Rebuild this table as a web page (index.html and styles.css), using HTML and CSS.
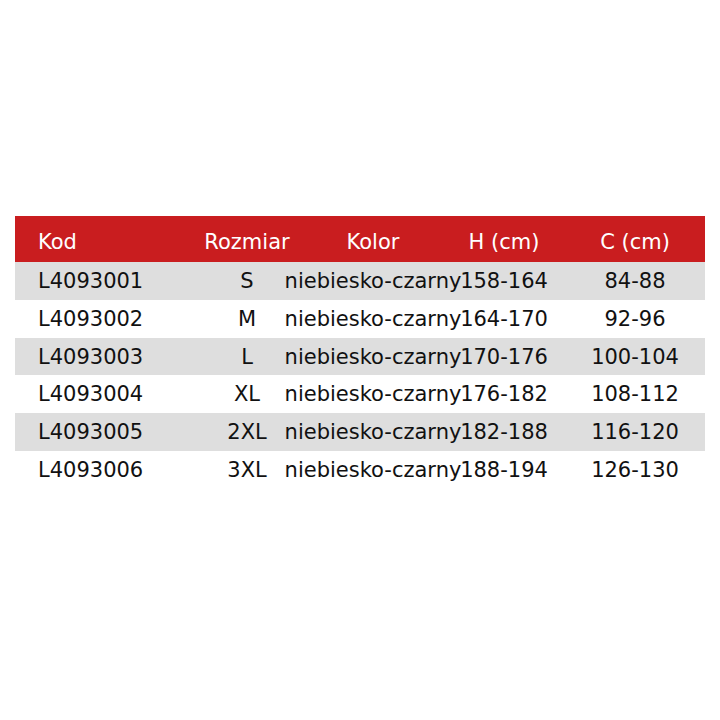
FILE: index.html
```html
<!DOCTYPE html>
<html lang="pl">
<head>
<meta charset="utf-8">
<link rel="stylesheet" href="styles.css">
</head>
<body>
<div class="page">
  <div class="table">
    <div class="row head">
      <div class="c kod">Kod</div><div class="c roz">Rozmiar</div><div class="c kol">Kolor</div><div class="c h">H (cm)</div><div class="c cc">C (cm)</div>
    </div>
    <div class="row alt">
      <div class="c kod">L4093001</div><div class="c roz">S</div><div class="c kol">niebiesko-czarny</div><div class="c h">158-164</div><div class="c cc">84-88</div>
    </div>
    <div class="row">
      <div class="c kod">L4093002</div><div class="c roz">M</div><div class="c kol">niebiesko-czarny</div><div class="c h">164-170</div><div class="c cc">92-96</div>
    </div>
    <div class="row alt">
      <div class="c kod">L4093003</div><div class="c roz">L</div><div class="c kol">niebiesko-czarny</div><div class="c h">170-176</div><div class="c cc">100-104</div>
    </div>
    <div class="row">
      <div class="c kod">L4093004</div><div class="c roz">XL</div><div class="c kol">niebiesko-czarny</div><div class="c h">176-182</div><div class="c cc">108-112</div>
    </div>
    <div class="row alt">
      <div class="c kod">L4093005</div><div class="c roz">2XL</div><div class="c kol">niebiesko-czarny</div><div class="c h">182-188</div><div class="c cc">116-120</div>
    </div>
    <div class="row">
      <div class="c kod">L4093006</div><div class="c roz">3XL</div><div class="c kol">niebiesko-czarny</div><div class="c h">188-194</div><div class="c cc">126-130</div>
    </div>
  </div>
</div>
</body>
</html>
```
FILE: styles.css
```css
html, body {
  margin: 0;
  padding: 0;
  background: #ffffff;
}
body {
  font-family: "DejaVu Sans", Verdana, sans-serif;
  font-size: 21px;
  color: #111111;
}
.page {
  padding: 216px 15px 0 15px;
}
.table {
  width: 690px;
  display: flex;
  flex-direction: column;
}
.row {
  display: grid;
  grid-template-columns: 195px 74px 178px 84px 19px 140px;
  height: 37.83px;
  align-items: center;
}
.row.alt {
  background: #dedede;
}
.row.head {
  height: 46px;
  background: #c91d1f;
  color: #ffffff;
  padding-top: 6px;
  box-sizing: border-box;
}
.c {
  white-space: nowrap;
  line-height: 24px;
  width: max-content;
  justify-self: center;
}
.c.kod {
  justify-self: start;
  padding-left: 23px;
}
.c.cc {
  grid-column: 6;
}
```
